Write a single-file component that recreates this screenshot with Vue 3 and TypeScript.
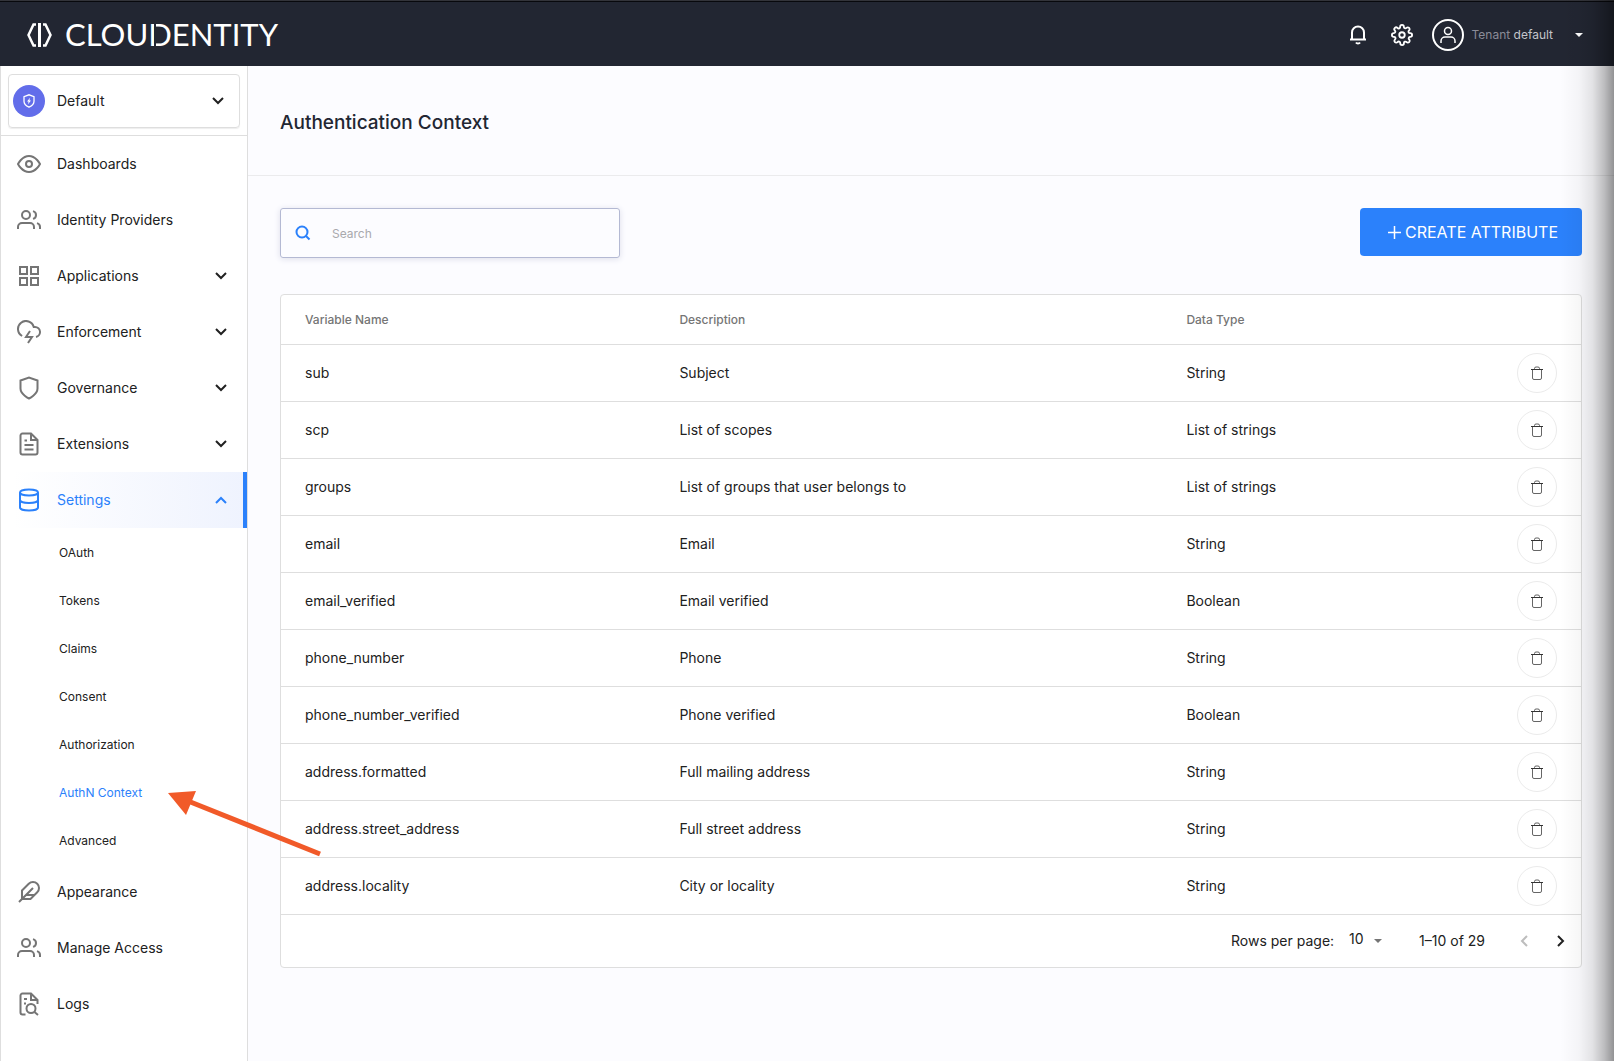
<script setup lang="ts">
import { ref } from 'vue'

interface NavItem {
  label: string
  icon: string
  expandable?: boolean
  children?: string[]
}

interface Attribute {
  name: string
  description: string
  type: string
}

const activeSection = 'Settings'
const activePage = 'AuthN Context'
const search = ref('')
const rowsPerPage = ref(10)

const icons: Record<string, string> = {
  eye: '<path d="M1 12s4-8 11-8 11 8 11 8-4 8-11 8-11-8-11-8z"/><circle cx="12" cy="12" r="3"/>',
  users:
    '<path d="M17 21v-2a4 4 0 0 0-4-4H5a4 4 0 0 0-4 4v2"/><circle cx="9" cy="7" r="4"/><path d="M23 21v-2a4 4 0 0 0-3-3.87"/><path d="M16 3.13a4 4 0 0 1 0 7.75"/>',
  grid: '<rect x="3" y="3" width="7" height="7"/><rect x="14" y="3" width="7" height="7"/><rect x="14" y="14" width="7" height="7"/><rect x="3" y="14" width="7" height="7"/>',
  lightning:
    '<path d="M19 16.9A5 5 0 0 0 18 7h-1.26a8 8 0 1 0-11.62 9"/><polyline points="13 11 9 17 15 17 11 23"/>',
  shield: '<path d="M12 22.500s8.500-4 8.500-10V4.500L12 1.500l-8.500 3v8c0 6 8.500 10 8.500 10z"/>',
  file: '<path d="M14 1.500H5.500a2 2 0 0 0-2 2v17a2 2 0 0 0 2 2h13a2 2 0 0 0 2-2V8z"/><polyline points="14 1.500 14 8 20.500 8"/><path d="M16.500 13h-9M16.500 17.500h-9M10 8.500H7.500"/>',
  database:
    '<ellipse cx="12" cy="4.500" rx="9" ry="3"/><path d="M21 12c0 1.660-4 3-9 3s-9-1.340-9-3"/><path d="M3 4.500v15c0 1.660 4 3 9 3s9-1.340 9-3v-15"/>',
  feather:
    '<path d="M20.240 12.240a6 6 0 0 0-8.490-8.490L5 10.500V19h8.500z"/><path d="M16 8L2 22M17.500 15H9"/>',
  logs: '<path d="M8.500 22.500h-3a2 2 0 0 1-2-2v-17a2 2 0 0 1 2-2H14L20.500 8v4"/><polyline points="14 1.500 14 8 20.500 8"/><path d="M10 7H7M9 11.500H7"/><circle cx="14" cy="16.500" r="4.500"/><path d="M17.500 20l3.500 3"/>',
}

const sections: NavItem[] = [
  { label: 'Dashboards', icon: 'eye' },
  { label: 'Identity Providers', icon: 'users' },
  { label: 'Applications', icon: 'grid', expandable: true },
  { label: 'Enforcement', icon: 'lightning', expandable: true },
  { label: 'Governance', icon: 'shield', expandable: true },
  { label: 'Extensions', icon: 'file', expandable: true },
  {
    label: 'Settings',
    icon: 'database',
    expandable: true,
    children: ['OAuth', 'Tokens', 'Claims', 'Consent', 'Authorization', 'AuthN Context', 'Advanced'],
  },
  { label: 'Appearance', icon: 'feather' },
  { label: 'Manage Access', icon: 'users' },
  { label: 'Logs', icon: 'logs' },
]

const attributes: Attribute[] = [
  { name: 'sub', description: 'Subject', type: 'String' },
  { name: 'scp', description: 'List of scopes', type: 'List of strings' },
  { name: 'groups', description: 'List of groups that user belongs to', type: 'List of strings' },
  { name: 'email', description: 'Email', type: 'String' },
  { name: 'email_verified', description: 'Email verified', type: 'Boolean' },
  { name: 'phone_number', description: 'Phone', type: 'String' },
  { name: 'phone_number_verified', description: 'Phone verified', type: 'Boolean' },
  { name: 'address.formatted', description: 'Full mailing address', type: 'String' },
  { name: 'address.street_address', description: 'Full street address', type: 'String' },
  { name: 'address.locality', description: 'City or locality', type: 'String' },
]
</script>

<template>
  <div class="app">
    <header class="topbar">
      <a class="brand" href="#">
        <svg class="brand-mark" width="28" height="24" viewBox="0 0 28 24" fill="none" stroke="currentColor">
          <path d="M10 1.500H7.500L2.500 12l5 10.500H10M17 1.500h2.500l5 10.500-5 10.500H17" stroke-width="2.500" />
          <path d="M13.500 0v24" stroke-width="3" />
        </svg>
        <span class="brand-name">CLOU<span class="brand-d">D</span>ENTITY</span>
      </a>
      <div class="tools">
        <button class="tool" aria-label="Notifications">
          <svg width="18" height="20" viewBox="0 0 18 20" fill="none" stroke="currentColor" stroke-width="2">
            <path d="M1 14.500h16M3 14.500V7.500a6 6 0 0 1 12 0v7M7 17.500c.8 1.300 3.200 1.300 4 0" />
          </svg>
        </button>
        <button class="tool" aria-label="Tenant settings">
          <svg width="22" height="22" viewBox="0 0 24 24" fill="none" stroke="currentColor" stroke-width="2">
            <circle cx="12" cy="12" r="3" />
            <path d="M19.400 15a1.650 1.650 0 0 0 .33 1.820l.06.06a2 2 0 1 1-2.830 2.830l-.06-.06a1.650 1.650 0 0 0-2.800 1.170V21a2 2 0 0 1-4 0v-.09A1.650 1.650 0 0 0 7.180 19.730l-.06.06a2 2 0 1 1-2.830-2.830l.06-.06A1.650 1.650 0 0 0 3.090 14H3a2 2 0 0 1 0-4h.09A1.650 1.650 0 0 0 4.270 7.180l-.06-.06a2 2 0 1 1 2.830-2.830l.06.06A1.650 1.650 0 0 0 10 3.090V3a2 2 0 0 1 4 0v.09a1.650 1.650 0 0 0 2.820 1.180l.06-.06a2 2 0 1 1 2.830 2.830l-.06.06A1.650 1.650 0 0 0 20.910 10H21a2 2 0 0 1 0 4h-.09a1.650 1.650 0 0 0-1.510 1z" />
          </svg>
        </button>
        <button class="tenant">
          <svg width="32" height="32" viewBox="0 0 32 32" fill="none" stroke="currentColor">
            <circle cx="16" cy="16" r="15" stroke-width="2" />
            <g stroke-width="1.500">
              <circle cx="16" cy="12" r="3.500" />
              <path d="M9 24v-2a4 4 0 0 1 4-4h6a4 4 0 0 1 4 4v2" />
            </g>
          </svg>
          <span class="tenant-name">Tenant <b>default</b></span>
          <svg class="caret" width="8" height="4" viewBox="0 0 8 4"><path d="M0 0h8L4 4z" fill="currentColor" /></svg>
        </button>
      </div>
    </header>

    <div class="body">
      <aside class="sidebar">
        <div class="workspace">
          <button class="workspace-button">
            <span class="workspace-badge">
              <svg width="14" height="14" viewBox="0 0 14 14" fill="none" stroke="currentColor">
                <path d="M7 13.200s5-2.200 5-6V2.600L7 .8 2 2.600v4.600c0 3.800 5 6 5 6z" stroke-width="1.300" />
                <path d="M8 3.800L5 7.500h1.600L6 10.200l3-3.700H7.400z" fill="currentColor" stroke="none" />
              </svg>
            </span>
            <span class="label">Default</span>
            <svg class="chevron" width="12" height="8" viewBox="0 0 12 8"><path d="M1 1l5 5 5-5" /></svg>
          </button>
        </div>
        <nav aria-label="Workspace">
          <template v-for="item in sections" :key="item.label">
            <a class="nav-item" :class="{ active: item.label === activeSection }" href="#">
              <svg class="nav-icon" width="24" height="24" viewBox="0 0 24 24" v-html="icons[item.icon]"></svg>
              <span class="label">{{ item.label }}</span>
              <svg v-if="item.expandable" class="chevron" width="12" height="8" viewBox="0 0 12 8">
                <path :d="item.children ? 'M1 7l5-5 5 5' : 'M1 1l5 5 5-5'" />
              </svg>
            </a>
            <a
              v-for="child in item.children"
              :key="child"
              class="sub-item"
              :class="{ current: child === activePage }"
              href="#"
            >
              {{ child }}
            </a>
          </template>
        </nav>
      </aside>

      <main class="content">
        <div class="page-head">
          <h1>Authentication Context</h1>
        </div>
        <div class="page-body">
          <div class="actions">
            <label class="search">
              <svg width="16" height="16" viewBox="0 0 16 16" fill="none" stroke="currentColor" stroke-width="2">
                <circle cx="7" cy="7" r="5.500" />
                <path d="M11 11l3.500 3.500" />
              </svg>
              <input v-model="search" type="text" placeholder="Search" aria-label="Search" />
            </label>
            <button class="create">
              <svg width="13" height="13" viewBox="0 0 13 13" stroke="currentColor" stroke-width="1.500">
                <path d="M6.500 0v13M0 6.500h13" />
              </svg>
              CREATE ATTRIBUTE
            </button>
          </div>

          <section class="card">
            <table>
              <colgroup>
                <col class="col-name" />
                <col class="col-description" />
                <col />
                <col class="col-action" />
              </colgroup>
              <thead>
                <tr>
                  <th scope="col">Variable Name</th>
                  <th scope="col">Description</th>
                  <th scope="col">Data Type</th>
                  <td></td>
                </tr>
              </thead>
              <tbody>
                <tr v-for="row in attributes" :key="row.name">
                  <td>{{ row.name }}</td>
                  <td>{{ row.description }}</td>
                  <td>{{ row.type }}</td>
                  <td class="action">
                    <button class="delete" :aria-label="`Delete ${row.name}`">
                      <svg width="12" height="14" viewBox="0 0 12 14" fill="none" stroke="currentColor">
                        <path d="M0 3.500h12" />
                        <path d="M1.500 3.500v8.500a1.500 1.500 0 0 0 1.500 1.500h6a1.500 1.500 0 0 0 1.500-1.500V3.500M3.500 3.500V2.500A1.500 1.500 0 0 1 5 1h2a1.500 1.500 0 0 1 1.500 1.500v1" opacity=".75" />
                      </svg>
                    </button>
                  </td>
                </tr>
              </tbody>
            </table>
            <footer class="pagination">
              <label for="rows">Rows per page:</label>
              <span class="select">
                <select id="rows" v-model="rowsPerPage">
                  <option :value="10">10</option>
                  <option :value="25">25</option>
                </select>
                <svg width="8" height="4" viewBox="0 0 8 4"><path d="M0 0h8L4 4z" fill="currentColor" /></svg>
              </span>
              <span class="range">1–10 of 29</span>
              <button class="page-button" aria-label="Previous page" disabled>
                <svg class="chevron" width="8" height="12" viewBox="0 0 8 12"><path d="M7 1L2 6l5 5" /></svg>
              </button>
              <button class="page-button" aria-label="Next page">
                <svg class="chevron" width="8" height="12" viewBox="0 0 8 12"><path d="M1 1l5 5-5 5" /></svg>
              </button>
            </footer>
          </section>
        </div>
      </main>
    </div>

    <svg class="pointer" width="156" height="68" viewBox="0 0 156 68">
      <path d="M20 10L152 63" stroke="#f15a29" stroke-width="5" />
      <path d="M0 2L28 0 18 24z" fill="#f15a29" />
    </svg>
    <div class="edge-shadow"></div>
  </div>
</template>

<style>
body {
  background: #fcfcff;
}
</style>

<style scoped>
* {
  box-sizing: border-box;
}

.app {
  position: relative;
  display: flex;
  flex-direction: column;
  min-height: 100vh;
  overflow: hidden;
  font-family: Inter, 'Liberation Sans', sans-serif;
  font-size: 14px;
  line-height: 20px;
  color: #212121;
}

a {
  color: inherit;
  text-decoration: none;
}

button {
  display: flex;
  align-items: center;
  justify-content: center;
  padding: 0;
  border: 0;
  background: none;
  font: inherit;
  color: inherit;
  cursor: pointer;
}

svg {
  flex: none;
}

.topbar {
  display: flex;
  align-items: center;
  justify-content: space-between;
  height: 66px;
  padding: 2px 31px 0 26px;
  background: #222632;
  border-top: 1px solid #33343a;
  box-shadow: inset 0 1px #08090d;
  color: #fff;
}

.brand {
  display: flex;
  align-items: center;
  gap: 11px;
}

.brand-name {
  padding-bottom: 2px;
  font-family: Lato, sans-serif;
  font-size: 31px;
  line-height: 36px;
}

.brand-d {
  position: relative;
}

.brand-d::after {
  content: '';
  position: absolute;
  top: 4px;
  bottom: 4px;
  left: 6px;
  width: 2px;
  background: #222632;
}

.tools {
  display: flex;
  align-items: center;
}

.tool {
  width: 44px;
  height: 32px;
}

.tenant {
  gap: 8px;
  margin-left: 8px;
}

.tenant-name {
  font-size: 12px;
  color: #8b8c98;
}

.tenant-name b {
  font-weight: 400;
  color: #c4c5cb;
}

.caret {
  margin-left: 14px;
}

.body {
  display: flex;
  flex: 1;
}

.sidebar {
  flex: none;
  width: 248px;
  background: #fff;
  border: 1px solid #dedede;
  border-width: 0 1px;
}

.workspace {
  padding: 8px 7px 7px;
  border-bottom: 1px solid #dedede;
}

.workspace-button {
  width: 100%;
  height: 54px;
  padding: 0 15px 0 4px;
  justify-content: flex-start;
  border: 1px solid #dedede;
  border-radius: 4px;
  box-shadow: 0 1px 1px #eee;
}

.workspace-badge {
  display: flex;
  align-items: center;
  justify-content: center;
  width: 32px;
  height: 32px;
  margin-right: 12px;
  border-radius: 50%;
  background: #626dea;
  color: #fff;
}

.label {
  flex: 1;
  text-align: left;
}

.chevron {
  fill: none;
  stroke: currentColor;
  stroke-width: 2;
}

.nav-item {
  display: flex;
  align-items: center;
  gap: 16px;
  height: 56px;
  padding: 0 20px 0 16px;
}

.nav-icon {
  fill: none;
  stroke: #757575;
  stroke-width: 2;
}

.nav-item.active {
  padding-right: 16px;
  border-right: 4px solid #2b81fb;
  background: linear-gradient(90deg, #fff 5%, #eff3fe);
  color: #2b81fb;
}

.active .nav-icon {
  stroke: #2b81fb;
}

.sub-item {
  display: flex;
  align-items: center;
  height: 48px;
  padding: 2px 0 0 58px;
  font-size: 12px;
}

.sub-item.current {
  color: #2b81fb;
}

.content {
  flex: 1;
  min-width: 0;
}

.page-head {
  display: flex;
  align-items: center;
  height: 110px;
  padding: 4px 32px 0;
  border-bottom: 1px solid #ebebed;
}

h1 {
  margin: 0;
  font-size: 19px;
  line-height: 28px;
  font-weight: 500;
  color: #222632;
}

.page-body {
  padding: 32px;
}

.actions {
  display: flex;
  align-items: flex-start;
  justify-content: space-between;
  margin-bottom: 36px;
}

.search {
  display: flex;
  align-items: center;
  gap: 21px;
  width: 340px;
  height: 50px;
  padding: 0 14px;
  border: 1px solid #b4b9d3;
  border-radius: 3px;
  box-shadow: 0 1px 6px #dddeea;
  color: #2b81fb;
}

.search input {
  flex: 1;
  min-width: 0;
  padding: 2px 0 0;
  border: 0;
  outline: 0;
  background: none;
  font: inherit;
  font-size: 12px;
  color: #212121;
}

.search input::placeholder {
  color: #a9a9ad;
}

.create {
  gap: 4px;
  height: 48px;
  padding: 0 24px 0 28px;
  border-radius: 4px;
  background: #2b81fb;
  font-size: 16px;
  color: #fff;
}

.card {
  background: #fff;
  border: 1px solid #dedede;
  border-radius: 4px;
}

table {
  width: 100%;
  table-layout: fixed;
  border-collapse: separate;
  border-spacing: 0;
}

.col-name {
  width: 28.8%;
}

.col-description {
  width: 39%;
}

.col-action {
  width: 88px;
}

th,
td {
  height: 57px;
  padding: 0 24px;
  border-bottom: 1px solid #dedede;
  text-align: left;
  font-weight: 400;
}

thead th,
thead td {
  height: 50px;
  font-size: 12px;
  font-weight: 500;
  color: #757575;
}

.delete {
  width: 40px;
  height: 40px;
  border: 1px solid #ebebeb;
  border-radius: 50%;
  color: #333;
}

.pagination {
  display: flex;
  align-items: center;
  justify-content: flex-end;
  height: 52px;
  padding-right: 2px;
}

.select {
  display: flex;
  align-items: center;
  margin: 0 37px 0 15px;
  color: #757575;
}

select {
  appearance: none;
  width: 25px;
  padding: 0 0 4px;
  border: 0;
  background: none;
  font: inherit;
  color: #212121;
}

.range {
  margin-right: 20px;
}

.page-button {
  width: 37px;
  height: 36px;
}

.page-button:disabled {
  color: #bdbdbd;
}

.pointer {
  position: absolute;
  top: 791px;
  left: 168px;
}

.edge-shadow {
  position: absolute;
  inset: 0 0 0 auto;
  width: 54px;
  background: linear-gradient(
    90deg,
    transparent,
    rgba(0, 0, 0, 0.03) 35%,
    rgba(0, 0, 0, 0.1) 60%,
    rgba(0, 0, 0, 0.25) 82%,
    rgba(0, 0, 0, 0.42)
  );
  pointer-events: none;
}
</style>
